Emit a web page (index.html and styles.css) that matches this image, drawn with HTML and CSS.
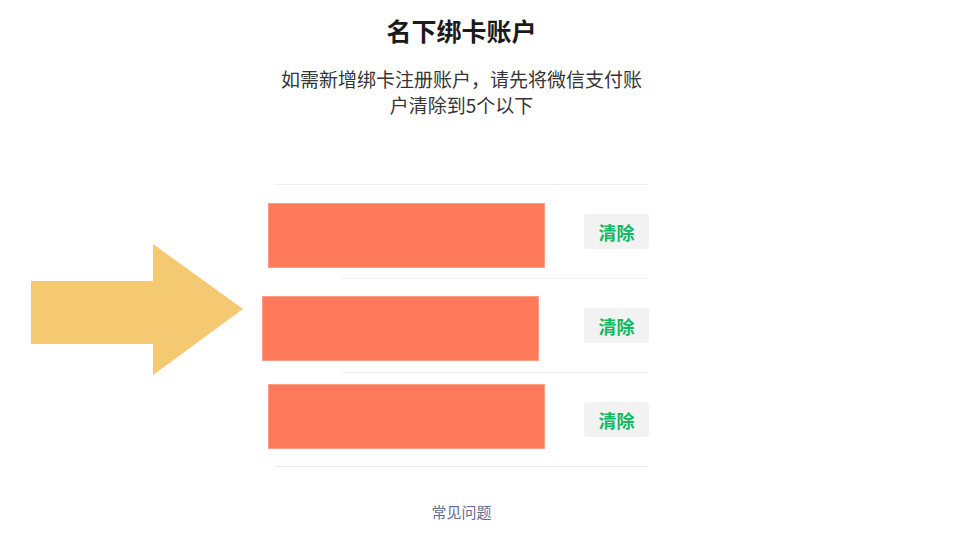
FILE: index.html
```html
<!DOCTYPE html>
<html lang="zh-CN">
<head>
<meta charset="utf-8">
<title>名下绑卡账户</title>
<link rel="stylesheet" href="styles.css">
</head>
<body>
<div class="page">
  <main class="column">
    <h1 class="title">名下绑卡账户</h1>
    <p class="subtitle">如需新增绑卡注册账户，请先将微信支付账户清除到5个以下</p>
    <ul class="list">
      <li class="row">
        <div class="row-body"><button class="clear-btn">清除</button></div>
        <div class="redact redact-1"></div>
      </li>
      <li class="row">
        <div class="row-body"><button class="clear-btn">清除</button></div>
        <div class="redact redact-2"></div>
      </li>
      <li class="row">
        <div class="row-body"><button class="clear-btn">清除</button></div>
        <div class="redact redact-3"></div>
      </li>
    </ul>
    <a class="faq">常见问题</a>
  </main>
  <svg class="arrow" width="212" height="132" viewBox="0 0 212 132" aria-hidden="true">
    <polygon points="0,37 122,37 122,0 212,65 122,131 122,100 0,100" fill="#f5c971"/>
  </svg>
</div>
</body>
</html>
```

FILE: styles.css
```css
html, body {
  margin: 0;
  padding: 0;
  background: #ffffff;
}

body {
  font-family: "Noto Sans CJK SC", "Noto Sans", "Liberation Sans", sans-serif;
  width: 960px;
  height: 540px;
  overflow: hidden;
}

.page {
  position: relative;
  width: 960px;
  height: 540px;
}

.column {
  width: 373px;
  margin-left: 275px;
  padding-top: 13px;
  display: flex;
  flex-direction: column;
  align-items: center;
}

.title {
  margin: 0;
  font-size: 25px;
  line-height: 34px;
  font-weight: 700;
  color: #1a1a1a;
  text-align: center;
}

.subtitle {
  margin: 19px 0 0;
  width: 370px;
  font-size: 19px;
  line-height: 26px;
  color: #353535;
  text-align: center;
}

.list {
  list-style: none;
  margin: 66px 0 0;
  padding: 0;
  width: 373px;
  border-top: 1px solid #efefef;
  border-bottom: 1px solid #ececec;
}

.row {
  position: relative;
  display: flex;
  padding-left: 67px;
}

.row-body {
  flex: 1;
  height: 93px;
  display: flex;
  align-items: center;
  justify-content: flex-end;
  border-bottom: 1px solid #eeeeee;
}

.row:last-child .row-body {
  border-bottom: none;
}

.clear-btn {
  width: 65px;
  height: 35px;
  margin-right: -1px;
  border: none;
  border-radius: 3px;
  background: #f2f2f2;
  color: #10b862;
  font-family: "Noto Sans CJK SC", "Noto Sans", sans-serif;
  font-size: 18px;
  font-weight: 700;
  padding: 0;
}

.redact {
  position: absolute;
  width: 277px;
  height: 65px;
  background: #ff7a5a;
  box-shadow: inset 0 0 0 1px #ff9c84;
}

.redact-1 { top: 18px; left: -7px; }
.redact-2 { top: 17px; left: -13px; }
.redact-3 { top: 11px; left: -7px; }

.faq {
  margin-top: 35px;
  font-size: 15px;
  line-height: 20px;
  color: #5f6f92;
  text-decoration: none;
}

.arrow {
  position: absolute;
  left: 31px;
  top: 244px;
}
```
